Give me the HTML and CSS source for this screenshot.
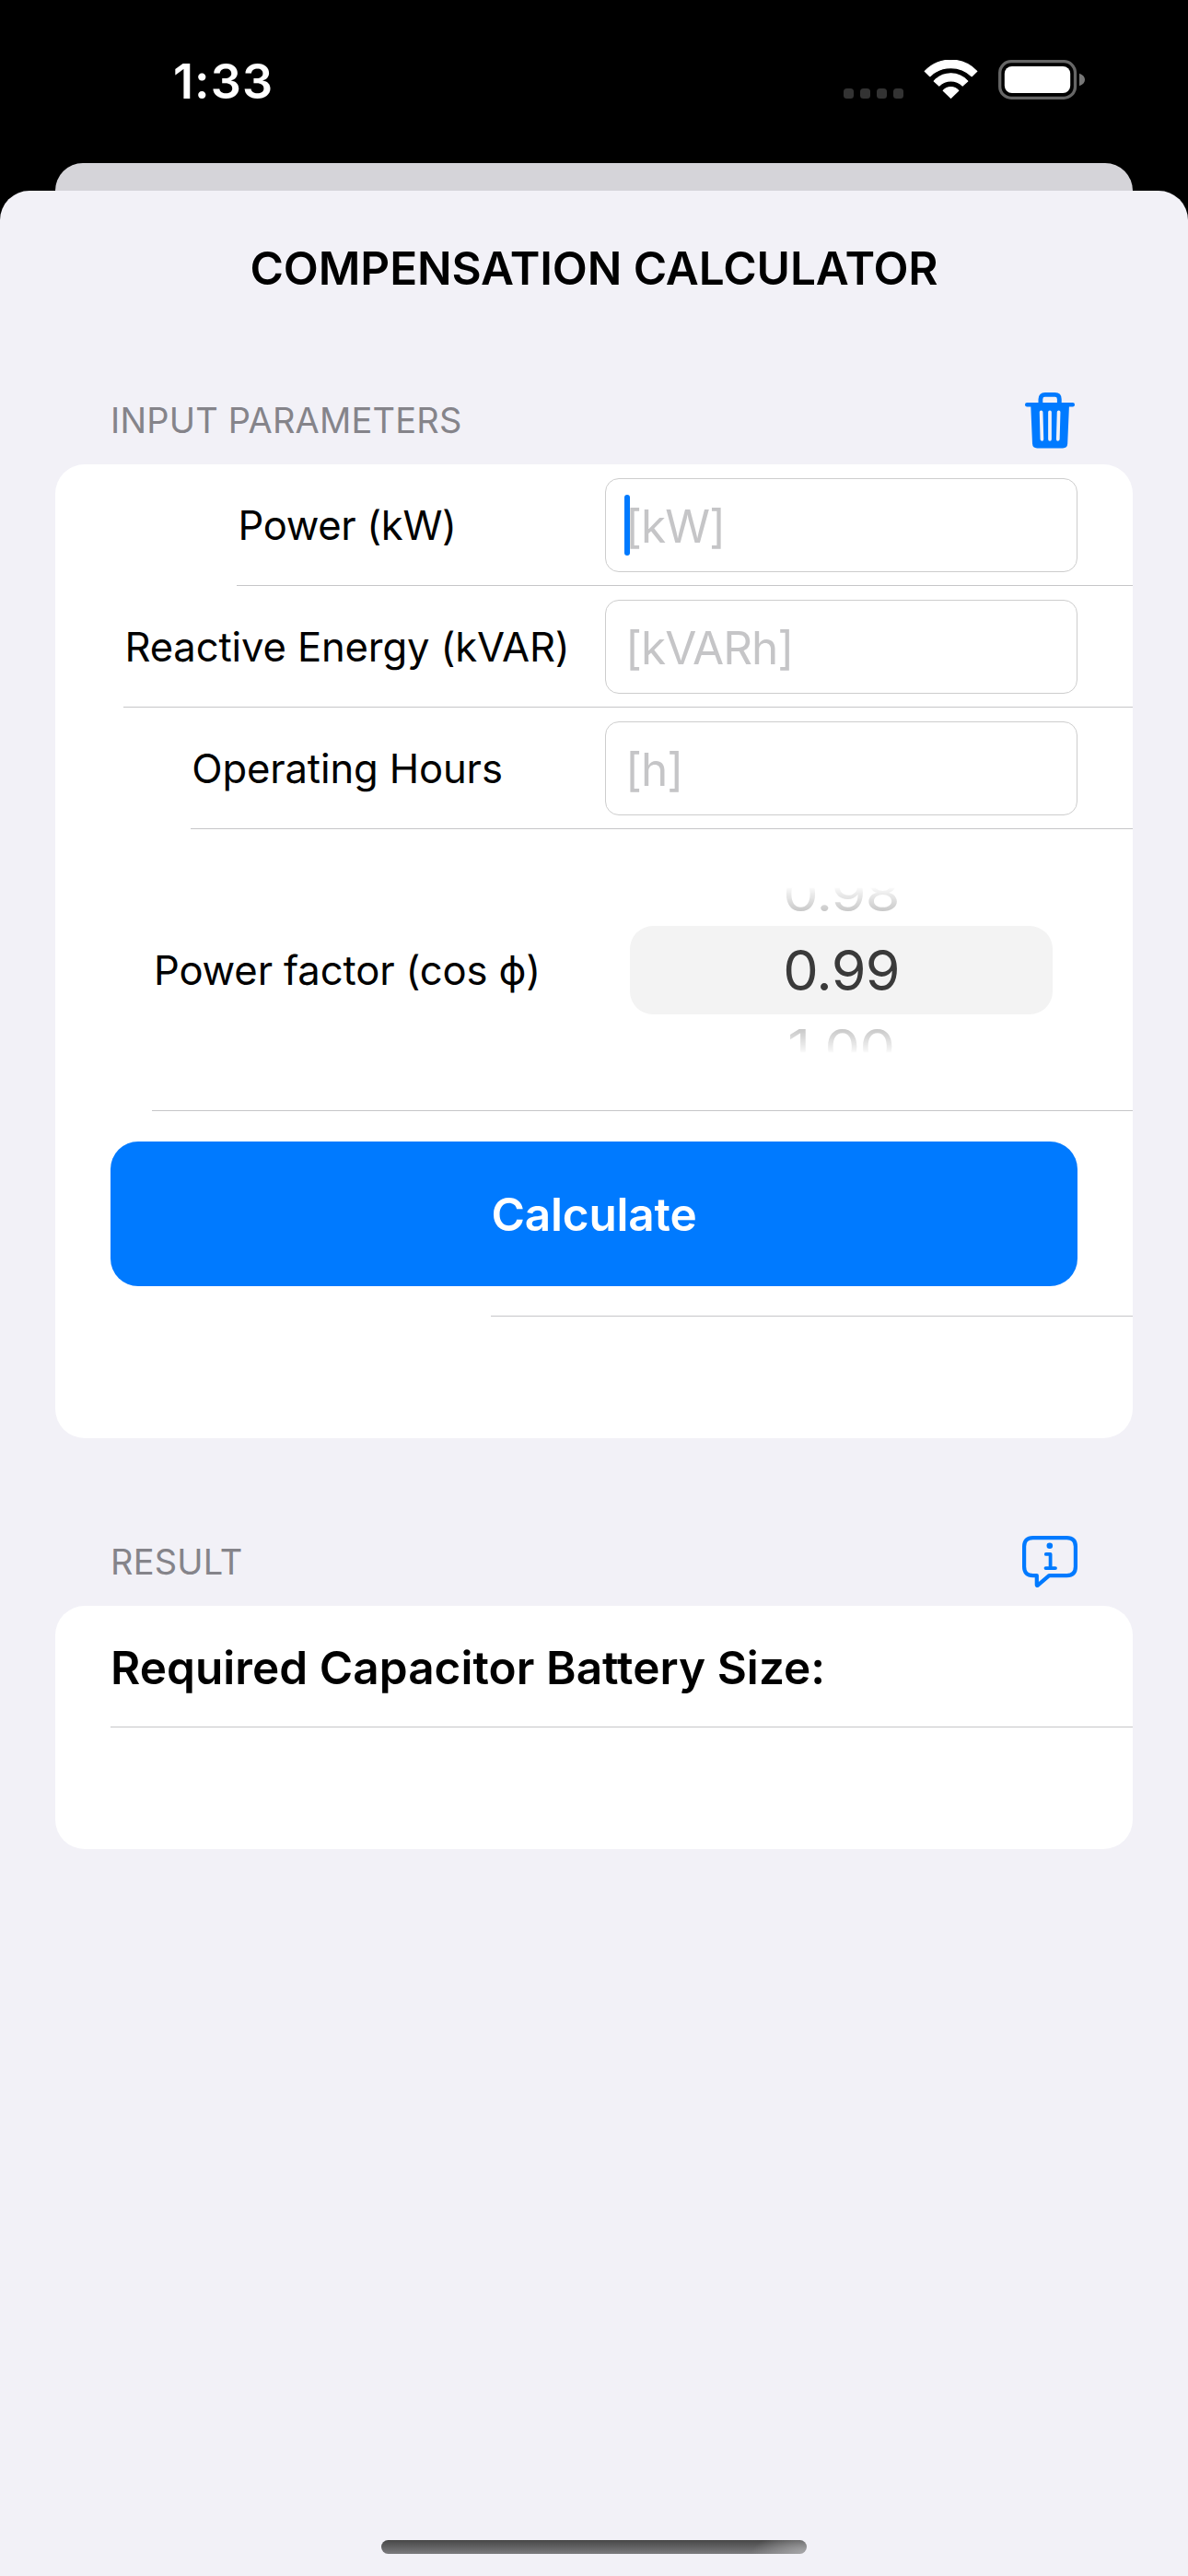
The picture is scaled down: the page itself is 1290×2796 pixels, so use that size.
FILE: index.html
```
<!DOCTYPE html>
<html lang="en">
<head>
<meta charset="utf-8">
<title>Compensation Calculator</title>
<link rel="stylesheet" href="styles.css">
</head>
<body>
<header class="status-bar">
  <span class="clock">1:33</span>
  <div class="status-icons">
    <svg class="cellular" width="65" height="43" viewBox="0 0 65 43" fill="#333333">
      <rect x="0" y="31" width="11" height="11" rx="3.5"/>
      <rect x="18" y="31" width="11" height="11" rx="3.5"/>
      <rect x="36" y="31" width="11" height="11" rx="3.5"/>
      <rect x="54" y="31" width="11" height="11" rx="3.5"/>
    </svg>
    <svg class="wifi" width="59" height="43" viewBox="0 0 59 43" fill="#fff" stroke="#fff" stroke-width="1.2" stroke-linejoin="round">
      <path d="M1.2 12.4A38.8 38.8 0 0 1 57.8 12.4L52.2 17.7A32.8 32.8 0 0 0 6.8 17.7Z"/>
      <path d="M11.2 23.1A24.3 24.3 0 0 1 47.8 23.1L42.2 28.1A18 18 0 0 0 16.8 28.1Z"/>
      <path d="M21.2 33.4A11 11 0 0 1 37.8 33.4L29.5 41.4Z"/>
    </svg>
    <svg class="battery" width="94" height="43" viewBox="0 0 94 43">
      <rect x="1.7" y="1.7" width="81.8" height="39.6" rx="12.3" fill="none" stroke="#666" stroke-width="3.3"/>
      <rect x="6.8" y="7" width="71.4" height="29" rx="8" fill="#fff"/>
      <path d="M88 14.7C92 16.2 94 18.6 94 21.5C94 24.4 92 26.8 88 28.3Z" fill="#777"/>
    </svg>
  </div>
</header>
<div class="back-sheet"></div>
<main class="sheet">
  <h1 class="sheet-title">COMPENSATION CALCULATOR</h1>

  <div class="section-header">
    <h2 class="section-title">INPUT PARAMETERS</h2>
    <svg class="trash-icon" width="54" height="61" viewBox="0 0 54 61">
      <path d="M16.9 12.5V7.2Q16.9 2.4 21.7 2.4H32.5Q37.3 2.4 37.3 7.2V12.5" fill="none" stroke="#007aff" stroke-width="4.8"/>
      <path d="M2.2 13.2H51.8" stroke="#007aff" stroke-width="4.4" stroke-linecap="round"/>
      <path fill="#007aff" d="M6.2 13H48L46.2 55.6Q46 60.5 41 60.5H13.2Q8.3 60.5 8 55.6Z"/>
      <path d="M17.6 21.3L18.4 50.8M27 21.3V50.8M36.6 21.3L35.8 50.8" stroke="#f2f1f7" stroke-width="3.7" stroke-linecap="round"/>
    </svg>
  </div>
  <section class="card">
    <div class="row">
      <label class="row-label row-label-power">Power (kW)</label>
      <div class="field focused"><input class="field-input" type="text" placeholder="[kW]"></div>
    </div>
    <div class="divider divider-power"></div>
    <div class="row">
      <label class="row-label">Reactive Energy (kVAR)</label>
      <div class="field"><input class="field-input" type="text" placeholder="[kVARh]"></div>
    </div>
    <div class="divider divider-energy"></div>
    <div class="row">
      <label class="row-label">Operating Hours</label>
      <div class="field"><input class="field-input" type="text" placeholder="[h]"></div>
    </div>
    <div class="divider divider-hours"></div>
    <div class="row row-picker">
      <label class="row-label">Power factor (cos ϕ)</label>
      <div class="picker">
        <div class="picker-side picker-prev"><span class="picker-ghost">0.98</span></div>
        <div class="picker-current">0.99</div>
        <div class="picker-side picker-next"><span class="picker-ghost">1.00</span></div>
      </div>
    </div>
    <div class="divider divider-factor"></div>
    <div class="row row-button">
      <button class="calculate">Calculate</button>
    </div>
    <div class="divider divider-button"></div>
    <div class="row row-empty"></div>
  </section>

  <div class="section-header section-header-result">
    <h2 class="section-title section-title-result">RESULT</h2>
    <svg class="info-icon" width="60" height="57" viewBox="0 0 60 57" fill="none" stroke="#007aff" stroke-width="4.2" stroke-linecap="round" stroke-linejoin="round">
      <path d="M11.6 2.1H48.4Q57.9 2.1 57.9 11.6V33.6Q57.9 43.1 48.4 43.1H29.2L16.6 53.8Q15.8 54.2 15.8 53.2V43.1H11.6Q2.1 43.1 2.1 33.6V11.6Q2.1 2.1 11.6 2.1Z"/>
      <path d="M25.8 19.9H30.6V35.1M25.5 35.1H36" stroke-width="3.8"/>
      <circle cx="29.8" cy="10.7" r="3.3" fill="#007aff" stroke="none"/>
    </svg>
  </div>
  <section class="card">
    <div class="row row-result"><strong class="result-label">Required Capacitor Battery Size:</strong></div>
    <div class="divider divider-result"></div>
    <div class="row row-result-empty"></div>
  </section>

  <div class="home-indicator"></div>
</main>
</body>
</html>
```
FILE: styles.css
```
* {
  box-sizing: border-box;
}

body {
  margin: 0;
  height: 2796px;
  display: flex;
  flex-direction: column;
  background: #000;
  color: #000;
  font-family: Inter, "Liberation Sans", sans-serif;
  overflow: hidden;
}

/* Status bar */
.status-bar {
  height: 177px;
  padding: 0 112px 0 188px;
  display: flex;
  align-items: center;
  justify-content: space-between;
}

.clock {
  color: #fff;
  font-size: 52px;
  font-weight: 600;
  letter-spacing: 1.1px;
  line-height: 60px;
}

.status-icons {
  display: flex;
  align-items: center;
  margin-top: -4px;
}

.wifi {
  margin: 0 22px;
}

/* Sheets */
.back-sheet {
  flex: none;
  height: 60px;
  margin: 0 60px -30px;
  border-radius: 30px 30px 0 0;
  background: #d5d4d9;
}

.sheet {
  flex: 1;
  padding: 54px 60px 24px;
  display: flex;
  flex-direction: column;
  border-radius: 32px 32px 0 0;
  background: #f2f1f7;
}

.sheet-title {
  margin: 0;
  font-size: 49.5px;
  font-weight: 600;
  letter-spacing: -0.1px;
  line-height: 60px;
  text-align: center;
}

/* Sections */
.section-header {
  height: 61px;
  margin: 104.5px 60px 17.5px;
  display: flex;
  align-items: center;
  justify-content: space-between;
}

.section-header-result {
  height: 57px;
  margin: 106px 60px 19px;
}

.section-title {
  margin: 0;
  color: #85848a;
  font-size: 38px;
  font-weight: 400;
  letter-spacing: 0.2px;
  line-height: 48px;
}

.section-title-result {
  padding-bottom: 2px;
}

.trash-icon {
  margin-right: 3px;
}

.card {
  display: flex;
  flex-direction: column;
  border-radius: 32px;
  background: #fff;
}

.row {
  height: 131px;
  padding: 0 60px;
  display: grid;
  grid-template-columns: 513px 513px;
  column-gap: 24px;
  align-items: center;
}

.row-label {
  padding: 2px 0 0 1px;
  font-size: 43.6px;
  letter-spacing: -0.14px;
  line-height: 54px;
  text-align: center;
  white-space: nowrap;
}

.row-label-power {
  letter-spacing: -0.35px;
}

.divider {
  height: 1px;
  background: #c6c6c8;
}

.divider-power { margin-left: 197px; }
.divider-energy { margin-left: 74px; }
.divider-hours { margin-left: 147px; }
.divider-factor { margin-left: 105px; }
.divider-button { margin-left: 473px; }
.divider-result { margin-left: 60px; }

/* Text fields */
.field {
  position: relative;
  height: 102px;
  border: 1px solid #cdcdcd;
  border-radius: 15px;
  background: #fff;
}

.field-input {
  width: 100%;
  height: 100%;
  padding: 2px 20px 0 21px;
  border: 0;
  outline: 0;
  background: transparent;
  font: 400 49.5px/60px Inter, "Liberation Sans", sans-serif;
  letter-spacing: -1px;
}

.field-input::placeholder {
  color: #c5c5c7;
  opacity: 1;
}

.focused::before {
  content: "";
  position: absolute;
  left: 20px;
  top: 17px;
  width: 6px;
  height: 66px;
  border-radius: 3px;
  background: #007aff;
}

/* Wheel picker */
.row-picker {
  height: 305px;
}

.picker {
  display: flex;
  flex-direction: column;
  align-items: center;
  font-size: 61px;
  letter-spacing: -0.8px;
  line-height: 74px;
}

.picker-current {
  width: 459px;
  height: 96px;
  display: flex;
  align-items: center;
  justify-content: center;
  border-radius: 25px;
  background: #f3f3f3;
  color: #3a3a3a;
}

.picker-side {
  height: 42px;
  display: flex;
  overflow: hidden;
  color: #c8c8c8;
}

.picker-ghost {
  flex: none;
  height: 74px;
  transform: scaleY(0.85);
}

.picker-prev {
  align-items: flex-end;
  mask-image: linear-gradient(to bottom, transparent 0, #0003 3px, #000 26px);
}

.picker-prev .picker-ghost {
  margin-bottom: -2px;
}

.picker-next {
  align-items: flex-start;
  letter-spacing: -0.3px;
  mask-image: linear-gradient(to top, transparent 0, #0003 3px, #000 26px);
}

.picker-next .picker-ghost {
  margin-top: -2px;
}

/* Button */
.row-button {
  height: 222px;
  grid-template-columns: 1fr;
}

.calculate {
  height: 157px;
  padding: 2px 0 0;
  border: 0;
  border-radius: 30px;
  background: #007aff;
  color: #fff;
  font: 600 49.5px/60px Inter, "Liberation Sans", sans-serif;
  letter-spacing: -0.17px;
}

.row-empty {
  height: 132px;
}

/* Result */
.row-result {
  grid-template-columns: 1fr;
}

.result-label {
  padding-top: 2px;
  font-size: 49.5px;
  font-weight: 600;
  letter-spacing: 0.05px;
  line-height: 60px;
  white-space: nowrap;
}

.row-result-empty {
  height: 132px;
}

.home-indicator {
  width: 462px;
  height: 15px;
  margin: auto auto 0;
  border-radius: 8px;
  background:
    radial-gradient(ellipse 60px 24px at 100% 100%, #a9a9ab, transparent),
    linear-gradient(#474747, #7b7b7e);
}
```
